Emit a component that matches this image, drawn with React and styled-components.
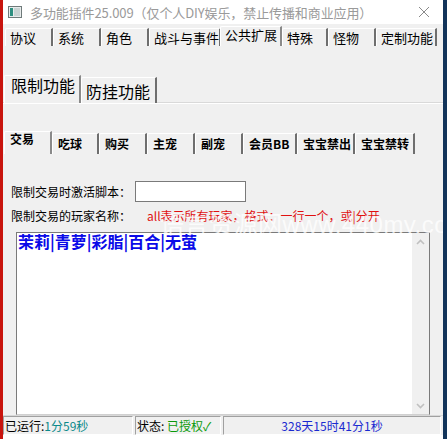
import React from "react";
import styled, { createGlobalStyle } from "styled-components";

const Global = createGlobalStyle`
  html, body { margin: 0; padding: 0; }
  body {
    width: 447px; height: 439px; overflow: hidden;
    background: #0d2a4a;
    font-family: "Noto Sans CJK SC", "Noto Sans", sans-serif;
  }
`;

const Desk = styled.div`
  display: flex;
  width: 447px;
  height: 439px;
  background: linear-gradient(90deg, #c8140e 0 3px, #ffffff 3px 443px, #12345a 443px);
`;

const Win = styled.div`
  position: relative;
  overflow: hidden;
  margin-left: 3px;
  width: 440px;
  height: 435px;
  display: flex;
  flex-direction: column;
  background: #f0f0f0;
`;

const TitleBar = styled.div`
  height: 24px;
  background: #ffffff;
  display: flex;
  align-items: center;
  padding-left: 5px;
  gap: 8px;
`;

const TitleText = styled.div`
  flex: 1;
  font-size: 13px;
  color: #9a9a9a;
  white-space: nowrap;
  letter-spacing: -0.1px;
`;

const CloseX = styled.div`
  width: 30px;
  display: flex;
  justify-content: center;
  margin-right: 4px;
`;

const TabRow = styled.div`
  display: flex;
  align-items: flex-end;
  height: ${(p) => p.h}px;
  margin-top: ${(p) => p.mt || 0}px;
  padding-left: ${(p) => p.pl || 0}px;
  border-bottom: ${(p) => (p.line ? "1px solid #ffffff" : "none")};
  box-shadow: ${(p) => (p.line ? "0 -1px 0 #d9d9d9 inset" : "none")};
`;

const Tab = styled.div`
  box-sizing: border-box;
  width: ${(p) => p.w}px;
  height: ${(p) => (p.sel ? p.h + 2 : p.h)}px;
  display: flex;
  align-items: ${(p) => (p.sel ? "flex-start" : "center")};
  padding-top: ${(p) => (p.sel ? 1 : 0)}px;
  padding-left: ${(p) => p.pad}px;
  font-size: ${(p) => p.fs}px;
  font-weight: ${(p) => (p.bold ? 700 : 400)};
  color: #000;
  white-space: nowrap;
  background: #f0f0f0;
  border-left: 1px solid #ffffff;
  border-top: 1px solid #ffffff;
  border-right: 2px solid ${(p) => (p.sel ? "#8a8a8a" : "#6e6e6e")};
  border-top-left-radius: 2px;
  margin-left: ${(p) => (p.sel ? -1 : 0)}px;
  line-height: 1;
`;

const Form = styled.div`
  display: flex;
  flex-direction: column;
  padding-left: 8px;
`;

const Row = styled.div`
  display: flex;
  align-items: center;
  height: ${(p) => p.h}px;
  margin-top: ${(p) => p.mt || 0}px;
  font-size: 12px;
  color: #000;
  white-space: nowrap;
`;

const Label = styled.span`
  width: ${(p) => p.w}px;
  display: inline-block;
`;

const Input = styled.div`
  width: 111px;
  height: 21px;
  box-sizing: border-box;
  border: 1px solid #7a7a7a;
  background: #fff;
`;

const Hint = styled.span`
  color: #e01010;
  font-size: 12px;
`;

const TextBox = styled.div`
  margin-left: 13px;
  margin-top: 7px;
  width: 414px;
  height: 183px;
  box-sizing: border-box;
  border: 1px solid #7a7a7a;
  border-bottom-color: #d0d0d0;
  background: #fff;
  display: flex;
`;

const TextContent = styled.div`
  flex: 1;
  padding: 0 0 0 1px;
  margin-top: -2px;
  font-size: 16px;
  font-weight: 700;
  color: #0a0ae8;
  line-height: 20px;
  white-space: nowrap;
`;

const Scroll = styled.div`
  width: 17px;
  background: #f0f0f0;
  display: flex;
  flex-direction: column;
  justify-content: space-between;
  align-items: center;
  padding: 6px 0 5px;
`;

const Status = styled.div`
  margin-top: auto;
  height: 19px;
  display: flex;
  border-top: 1px solid #d8d8d8;
  font-size: 12px;
  background: #f0f0f0;
`;

const Panel = styled.div`
  box-sizing: border-box;
  width: ${(p) => p.w}px;
  ${(p) => (p.grow ? "flex: 1;" : "")}
  margin-right: 2px;
  border-top: 1px solid #a0a0a0;
  border-left: 1px solid #a0a0a0;
  border-right: 1px solid #fff;
  border-bottom: 1px solid #fff;
  display: flex;
  align-items: center;
  justify-content: ${(p) => (p.center ? "center" : "flex-start")};
  padding-left: ${(p) => (p.center ? 0 : 1)}px;
  white-space: nowrap;
  color: #000;
`;

const C = styled.span`
  color: ${(p) => p.c};
`;

const Watermark = styled.div`
  position: absolute;
  left: 157px;
  top: 205px;
  font-family: "Liberation Sans", "Noto Sans CJK SC", sans-serif;
  font-size: 24px;
  color: rgba(255, 255, 255, 0.75);
  white-space: nowrap;
  pointer-events: none;
  letter-spacing: 0.5px;
`;

const AppIcon = () => (
  <svg width="14" height="12" viewBox="0 0 14 12">
    <rect x="0.5" y="0.5" width="13" height="11" fill="#e8ecec" stroke="#6f7a7a" />
    <rect x="2" y="2" width="3" height="8" fill="#2e8f80" />
    <rect x="6" y="2" width="6" height="8" fill="#c9d3d3" />
  </svg>
);

const topTabs = [
  ["协议", 48], ["系统", 48], ["角色", 48], ["战斗与事件", 72],
  ["公共扩展", 62, true], ["特殊", 46], ["怪物", 48], ["定制功能", 61],
];
const subTabs = [["交易", 48, true], ["吃球", 47], ["购买", 48], ["主宠", 48], ["副宠", 48], ["会员BB", 54], ["宝宝禁出", 58], ["宝宝禁转", 60]];

export default function App() {
  return (
    <>
      <Global />
      <Desk>
        <Win>
          <TitleBar>
            <AppIcon />
            <TitleText>多功能插件25.009（仅个人DIY娱乐，禁止传播和商业应用）</TitleText>
            <CloseX>
              <svg width="12" height="12" viewBox="0 0 12 12">
                <path d="M1 1L11 11M11 1L1 11" stroke="#8a8a8a" strokeWidth="1" />
              </svg>
            </CloseX>
          </TitleBar>
          <TabRow h={22} pl={2}>
            {topTabs.map(([t, w, s]) => (
              <Tab key={t} w={w} h={18} fs={13} pad={4} sel={s}>{t}</Tab>
            ))}
          </TabRow>
          <TabRow h={30} mt={27} pl={2} line>
            <Tab w={77} h={26} fs={16} pad={6} sel>限制功能</Tab>
            <Tab w={76} h={26} fs={16} pad={4}>防挂功能</Tab>
          </TabRow>
          <TabRow h={24} mt={26} pl={2}>
            {subTabs.map(([t, w, s]) => (
              <Tab key={t} w={w} h={21} fs={12} pad={5} bold sel={s}>{t}</Tab>
            ))}
          </TabRow>
          <Form>
            <Row h={22} mt={26}>
              <Label w={124}>限制交易时激活脚本：</Label>
              <Input />
            </Row>
            <Row h={20} mt={3}>
              <Label w={136}>限制交易的玩家名称：</Label>
              <Hint>all表示所有玩家，格式：一行一个，或|分开</Hint>
            </Row>
          </Form>
          <TextBox>
            <TextContent>茉莉|青萝|彩脂|百合|无萤</TextContent>
            <Scroll>
              <svg width="9" height="6" viewBox="0 0 9 6"><path d="M1 5L4.5 1.5L8 5" stroke="#c0c0c0" strokeWidth="1.6" fill="none" /></svg>
              <svg width="9" height="6" viewBox="0 0 9 6"><path d="M1 1L4.5 4.5L8 1" stroke="#c0c0c0" strokeWidth="1.6" fill="none" /></svg>
            </Scroll>
          </TextBox>
          <Status>
            <Panel w={130}>已运行:<C c="#0b8a8a">1分59秒</C></Panel>
            <Panel w={86}>状态: <C c="#0a9a0a">&nbsp;已授权✓</C></Panel>
            <Panel grow center><C c="#1a2ad0">328天15时41分1秒</C></Panel>
          </Status>
          <Watermark>语言资源网www.440my.com</Watermark>
        </Win>
      </Desk>
    </>
  );
}
